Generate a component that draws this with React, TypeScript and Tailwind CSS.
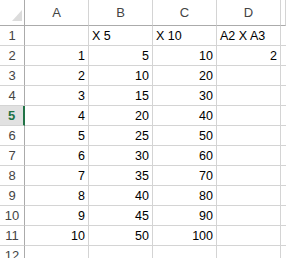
const cols = ['A', 'B', 'C', 'D', ''];

type Cell = { v: string; align?: 'l' | 'r' };

const rows: Cell[][] = [
  [{ v: '' }, { v: 'X 5', align: 'l' }, { v: 'X 10', align: 'l' }, { v: 'A2 X A3', align: 'l' }],
  ...Array.from({ length: 10 }, (_, i) => {
    const n = i + 1;
    const r: Cell[] = [
      { v: String(n), align: 'r' },
      { v: String(n * 5), align: 'r' },
      { v: String(n * 10), align: 'r' },
      { v: n === 1 ? '2' : '', align: 'r' },
    ];
    return r;
  }),
  [{ v: '' }, { v: '' }, { v: '' }, { v: '' }],
];

export default function App() {
  return (
    <div className="w-[286px] h-[258px] overflow-hidden bg-white font-['Liberation_Sans',Arial,sans-serif] text-[12.5px] text-black">
      <div className="grid grid-cols-[25px_64px_64px_64px_64px_1fr] grid-rows-[26px] auto-rows-[20px]">
        {/* header row */}
        <div className="relative border-r border-b border-[#ababab] bg-white">
          <svg width="10" height="11" className="absolute left-[12px] top-[10px]">
            <polygon points="10,0 10,11 0,11" fill="#dcdcdc" />
          </svg>
        </div>
        {cols.map((c, i) => (
          <div
            key={i}
            className="flex items-center justify-center pt-[1px] border-r border-[#d4d4d4] border-b border-b-[#ababab] text-[#444] bg-white text-[13px]"
          >
            {c}
          </div>
        ))}

        {rows.map((r, ri) => {
          const sel = ri === 4;
          return [
            <div
              key={`h${ri}`}
              className={
                sel
                  ? 'flex items-center justify-center pt-[1px] border-b border-[#d4d4d4] border-r-2 border-r-[#217346] bg-[#e1e1e1] text-[#217346] font-bold text-[13px]'
                  : 'flex items-center justify-center pt-[1px] border-b border-[#d4d4d4] border-r border-r-[#ababab] text-[#444] text-[13px]'
              }
            >
              {ri + 1}
            </div>,
            ...r.map((cell, ci) => (
              <div
                key={`c${ri}-${ci}`}
                className={
                  'flex items-center pt-[1px] px-[3px] border-r border-b border-[#d4d4d4] whitespace-nowrap ' +
                  (cell.align === 'r' ? 'justify-end' : 'justify-start')
                }
              >
                {cell.v}
              </div>
            )),
            <div key={`e${ri}`} className="border-b border-[#d4d4d4]" />,
          ];
        })}
      </div>
    </div>
  );
}
